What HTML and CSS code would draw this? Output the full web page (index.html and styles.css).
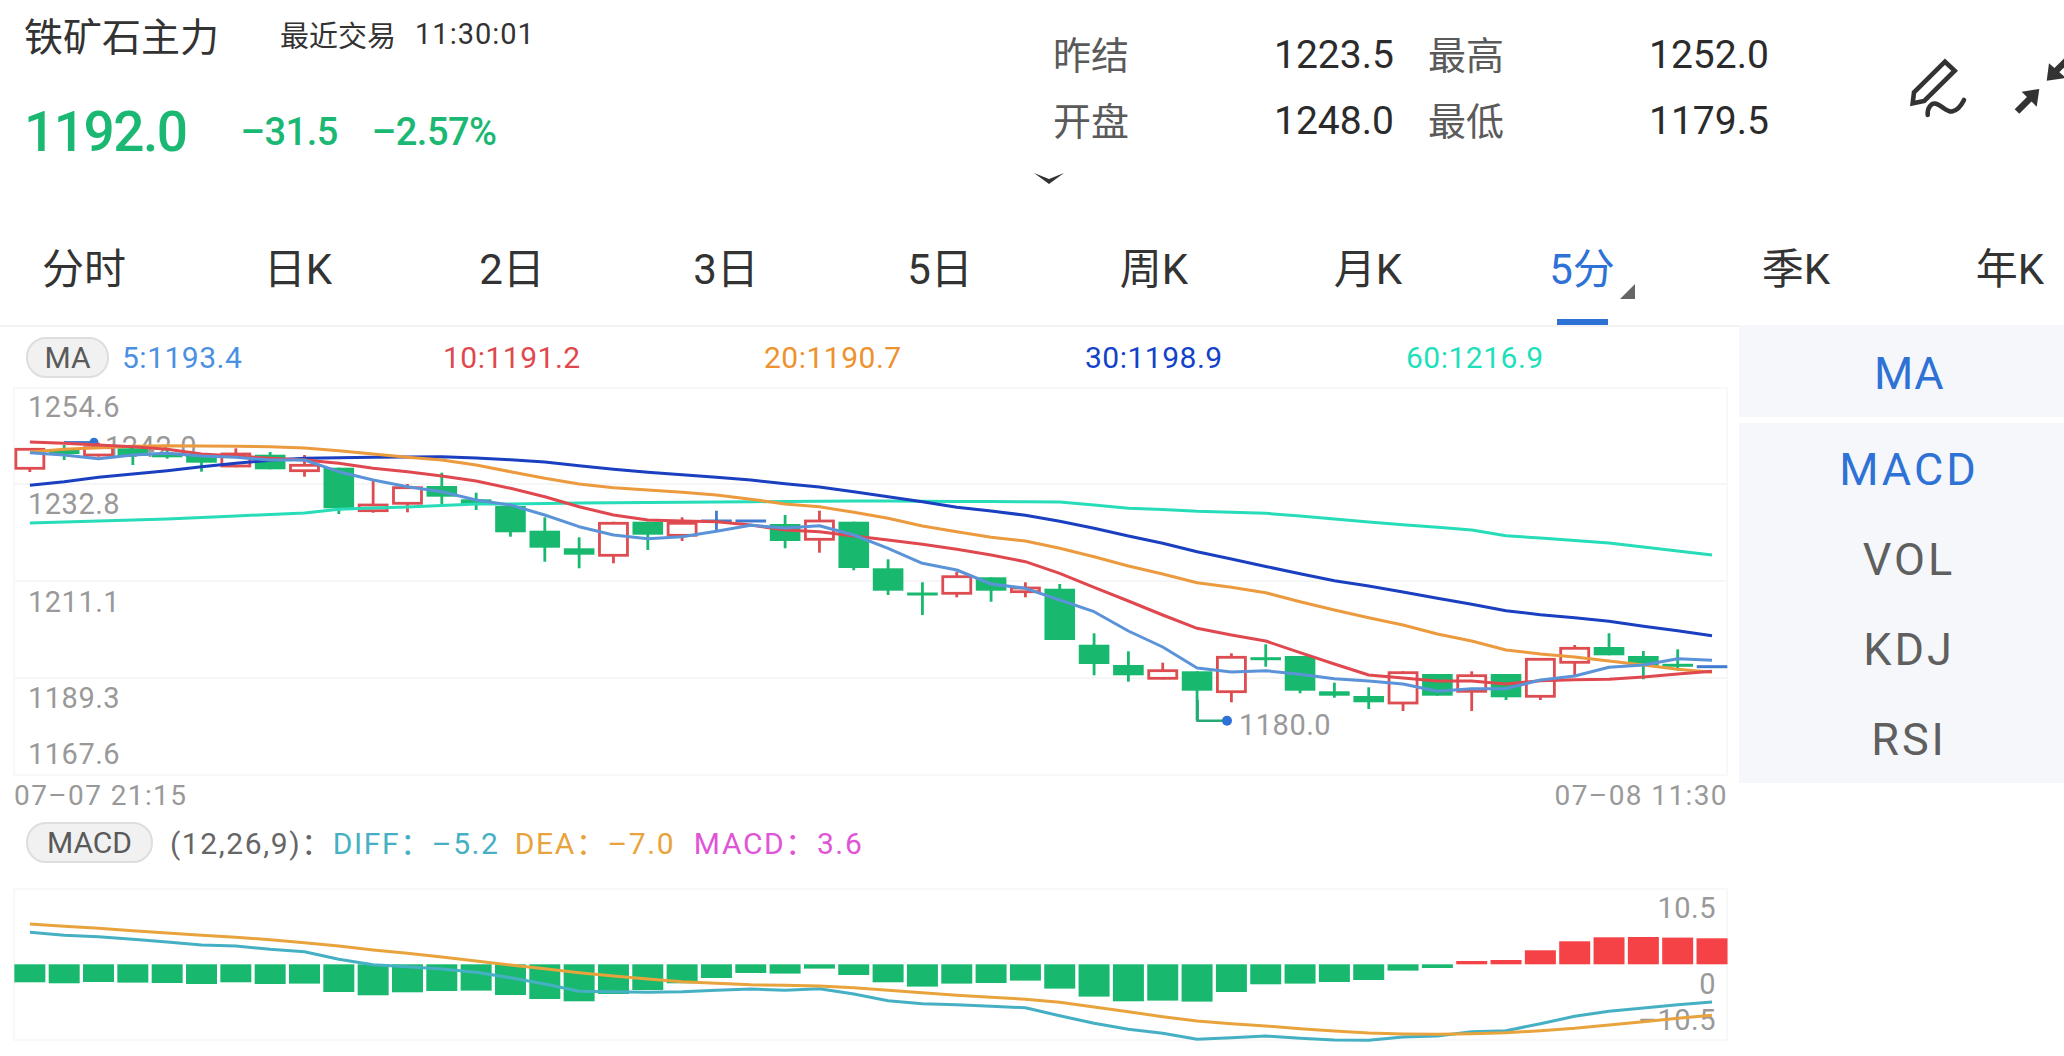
FILE: index.html
```html
<!DOCTYPE html>
<html lang="zh-CN">
<head>
    <meta charset="UTF-8">
    <meta name="viewport" content="width=device-width, initial-scale=1.0">
    <title>铁矿石主力</title>
    <link rel="stylesheet" href="styles.css">
</head>
<body>
    <div class="header">
        <div class="quote">
            <div class="quote-title">
                <h1>铁矿石主力</h1>
                <span class="trade-label">最近交易</span>
                <span class="trade-time">11:30:01</span>
            </div>
            <div class="quote-price">
                <span class="price">1192.0</span>
                <span class="change">–31.5</span>
                <span class="change change-pct">–2.57%</span>
            </div>
        </div>
        <div class="stats-col">
            <div class="stats">
                <span class="stat-label">昨结</span><span class="stat-value">1223.5</span>
                <span class="stat-label">最高</span><span class="stat-value">1252.0</span>
                <span class="stat-label">开盘</span><span class="stat-value">1248.0</span>
                <span class="stat-label">最低</span><span class="stat-value">1179.5</span>
            </div>
            <svg class="chevron" viewBox="0 0 30 11" width="30" height="11">
                <path d="M0 0 L15 6 L30 0 L15 11 Z" fill="#333"/>
            </svg>
        </div>
        <div class="tools">
            <svg class="icon-pencil" viewBox="1910 56 58 62" width="58" height="62" fill="none" stroke="#333" stroke-width="4.6">
                <path d="M1912.7 103.3 L1914 92.3 L1945 61.7 L1954.7 70.7 L1924.3 101 Z" stroke-linejoin="miter"/>
                <path d="M1927.7 115 C1927 107 1932 103 1935 103.5 C1942 105 1946 112 1952 111.5 C1958 110.5 1962 104 1964 100" stroke-linecap="round"/>
            </svg>
            <svg class="icon-expand" viewBox="2014 56 50 60" width="50" height="60">
                <path d="M2021.7 91.7 L2039.3 89 L2036.7 106.7 Z" fill="#333"/>
                <path d="M2017 111.5 L2031 97.5" stroke="#333" stroke-width="6.5"/>
                <path d="M2046.7 80.7 L2049 63.3 L2066 78 Z" fill="#333"/>
                <path d="M2054 73 L2072 55" stroke="#333" stroke-width="6.5"/>
            </svg>
        </div>
    </div>

    <div class="tabs">
        <div class="tab">分时</div>
        <div class="tab">日K</div>
        <div class="tab">2日</div>
        <div class="tab">3日</div>
        <div class="tab">5日</div>
        <div class="tab">周K</div>
        <div class="tab">月K</div>
        <div class="tab active">5分<i class="tab-corner"></i></div>
        <div class="tab">季K</div>
        <div class="tab">年K</div>
    </div>

    <div class="main">
        <div class="charts">
            <div class="legend ma-legend">
                <span class="pill">MA</span>
                <span class="ma-item ma5">5:1193.4</span>
                <span class="ma-item ma10">10:1191.2</span>
                <span class="ma-item ma20">20:1190.7</span>
                <span class="ma-item ma30">30:1198.9</span>
                <span class="ma-item ma60">60:1216.9</span>
            </div>
            <svg id="kline" class="chart" viewBox="0 387 1739 390" width="1739" height="390"></svg>
            <div class="dates">
                <span>07–07 21:15</span>
                <span>07–08 11:30</span>
            </div>
            <div class="legend macd-legend">
                <span class="pill pill-macd">MACD</span>
                <span class="macd-params">(12,26,9)：</span>
                <span class="macd-item diff">DIFF：–5.2</span>
                <span class="macd-item dea">DEA：–7.0</span>
                <span class="macd-item macd">MACD：3.6</span>
            </div>
            <svg id="macd" class="chart" viewBox="0 888 1739 154" width="1739" height="154"></svg>
        </div>
        <div class="side">
            <div class="side-box side-ma">
                <div class="side-item on">MA</div>
            </div>
            <div class="side-box">
                <div class="side-item on">MACD</div>
                <div class="side-item">VOL</div>
                <div class="side-item">KDJ</div>
                <div class="side-item">RSI</div>
            </div>
        </div>
    </div>

    <script src="chart.js"></script>
</body>
</html>
```

FILE: styles.css
```css
html, body {
    margin: 0;
    width: 2064px;
    height: 1056px;
    overflow: hidden;
    background-color: #ffffff;
    font-family: Roboto, "Noto Sans CJK SC", sans-serif;
    color: #333;
}
.header {
    display: flex;
    height: 220px;
}
.quote {
    width: 1034px;
    padding-left: 24px;
    box-sizing: border-box;
}
.quote-title {
    display: flex;
    align-items: center;
    height: 68px;
}
.quote-title h1 {
    margin: 0;
    font-size: 39px;
    font-weight: 400;
    color: #333;
}
.trade-label {
    margin-left: 61px;
    font-size: 29px;
}
.trade-time {
    margin-left: 19px;
    font-size: 29px;
    letter-spacing: 1px;
}
.quote-price {
    display: flex;
    align-items: center;
    height: 58px;
    margin-top: 35px;
    color: #1ab873;
}
.price {
    font-size: 55px;
    font-weight: 500;
    letter-spacing: -1.5px;
    margin-right: 54px;
}
.change {
    font-size: 38px;
    font-weight: 500;
    letter-spacing: -0.5px;
}
.change-pct {
    margin-left: 34px;
}
.stats-col {
    width: 876px;
}
.stats {
    display: grid;
    grid-template-columns: 221px 154px 221px auto;
    grid-auto-rows: 66px;
    align-items: center;
    padding: 22px 0 0 19px;
}
.stat-label {
    font-size: 38px;
    color: #5a5a5a;
    margin-bottom: 5px;
}
.stat-value {
    font-size: 39px;
    color: #2b2b2b;
}
.chevron {
    display: block;
    margin-top: 19px;
}
.tools {
    display: flex;
    align-items: flex-start;
    padding-top: 56px;
    gap: 46px;
}
.tools svg {
    display: block;
}
.tabs {
    display: flex;
    height: 105px;
    margin-left: -23px;
    width: 2140px;
}
.tab {
    position: relative;
    flex: 0 0 214px;
    height: 100%;
    box-sizing: border-box;
    padding-top: 21px;
    line-height: 58px;
    font-size: 42px;
    text-align: center;
    color: #333;
}
.tab.active {
    color: #2f72d6;
}
.tab.active::after {
    content: "";
    position: absolute;
    left: 82px;
    bottom: 0;
    width: 51px;
    height: 6px;
    background-color: #2f72d6;
}
.tab-corner {
    position: absolute;
    left: 145px;
    top: 64px;
    border-left: 15px solid transparent;
    border-bottom: 15px solid #666;
}
.main {
    display: flex;
}
.charts {
    width: 1739px;
    border-top: 2px solid #f3f3f3;
}
.chart {
    display: block;
}
.legend {
    display: flex;
    align-items: center;
}
.ma-legend {
    height: 60px;
    padding-left: 26px;
}
.pill {
    box-sizing: border-box;
    width: 83px;
    height: 41px;
    line-height: 37px;
    border: 2px solid #dedede;
    border-radius: 20px;
    background-color: #f1f1f1;
    text-align: center;
    font-size: 30px;
    letter-spacing: 0;
    color: #5a5a5a;
}
.pill-macd {
    width: 127px;
}
.ma-item {
    flex: 0 0 321px;
    font-size: 30px;
    letter-spacing: 0.5px;
}
.ma-legend .pill {
    margin-right: 13px;
}
.ma5 { color: #4a90e2; }
.ma10 { color: #e0484f; }
.ma20 { color: #ee922e; }
.ma30 { color: #1142c9; }
.ma60 { color: #1fe0bb; }
.dates {
    display: flex;
    justify-content: space-between;
    height: 37px;
    padding: 0 11px 0 14px;
    line-height: 38px;
    font-size: 28px;
    color: #999;
    letter-spacing: 1.4px;
}
.macd-legend {
    height: 74px;
    padding: 8px 0 25px 26px;
    box-sizing: border-box;
    font-size: 30px;
    letter-spacing: 1.6px;
}
.macd-params {
    margin: 0 0 3px 17px;
    color: #666;
}
.diff {
    flex: 0 0 182px;
    margin-bottom: 3px;
    color: #45b0c4;
}
.dea {
    flex: 0 0 179px;
    margin-bottom: 3px;
    color: #e9a33c;
}
.macd {
    margin-bottom: 3px;
    color: #e055d8;
}
.side {
    width: 325px;
}
.side-box {
    background-color: #f5f7fa;
    margin-bottom: 6px;
}
.side-ma {
    padding-top: 2px;
}
.side-item {
    height: 90px;
    line-height: 93px;
    text-align: center;
    font-size: 45px;
    letter-spacing: 3px;
    color: #5f5f5f;
    padding-left: 15px;
}
.side-ma .side-item {
    letter-spacing: 0.5px;
}
.side-item.on {
    color: #2f72d6;
}
.axis-label {
    font-size: 29px;
    fill: #999;
    letter-spacing: 0.5px;
}
```

FILE: chart.js
```js
const SVG_NS = 'http://www.w3.org/2000/svg';
const GREEN = '#18b96e';
const RED = '#dd4c50';
const BLUE = '#3f7bd0';

// x of the nth candle, same slots in both panels
const slotX = i => 29.85 + 34.33 * i;

// [type, bodyTop, bodyBottom, wickTop, wickBottom], screen y
// u = up (hollow), d = down (filled), f = flat
const candles = [
    ['u', 449.3, 468.3, 448, 472], ['d', 450, 454, 445, 460], ['u', 447.7, 455, 442.7, 456.7],
    ['d', 448.3, 456, 446.7, 465], ['d', 452.7, 457.3, 448.3, 458.7], ['d', 456, 462.7, 455, 471.7],
    ['u', 454, 466, 448.3, 467.3], ['d', 454.7, 469.3, 452, 469.3], ['u', 465.3, 470.7, 455, 476.7],
    ['d', 467.7, 508.3, 467.7, 514], ['u', 505, 510.7, 480, 512.7], ['u', 487.7, 503.3, 484, 512.3],
    ['d', 486, 496.7, 472.7, 504], ['d', 499.3, 505, 492.7, 510], ['d', 506, 532.3, 506, 536.7],
    ['d', 530.7, 547.7, 517.3, 561.7], ['d', 548.3, 554.7, 537.3, 568.3], ['u', 523.3, 555.3, 521.7, 563.3],
    ['d', 521.7, 534.7, 521.7, 550], ['u', 523.3, 535.3, 517.3, 541], ['f', 521, 521, 510.7, 530.7],
    ['f', 521, 521, 521, 521], ['d', 524, 541, 515, 548.3], ['u', 521, 539.3, 510.7, 552.7],
    ['d', 521.7, 568, 521.7, 570.3], ['d', 568.3, 590.7, 559.3, 595], ['g', 594, 594, 582.3, 615],
    ['u', 576.7, 593.3, 571.7, 597.3], ['d', 577.3, 590.7, 577.3, 601.7], ['u', 588, 591.7, 582.3, 597.3],
    ['d', 588.7, 640, 584, 640], ['d', 644.7, 664, 633.3, 675.3], ['d', 665, 675.3, 651.3, 681.7],
    ['u', 670.7, 678.3, 662.7, 679.3], ['d', 671.3, 690.7, 671.3, 720.7], ['u', 657.3, 691.7, 653.3, 702.3],
    ['g', 658.7, 658.7, 644.3, 666.7], ['d', 656, 690.7, 656, 693.3], ['d', 691.3, 695.7, 682.7, 697.7],
    ['d', 696, 702.3, 687.3, 709], ['u', 672.7, 703, 671.3, 711], ['d', 674, 695.7, 674, 695.7],
    ['u', 675.7, 691.3, 671.3, 711], ['d', 674, 697.3, 674, 700], ['u', 659.3, 696.3, 659.3, 700],
    ['u', 648.3, 662.3, 645, 675], ['d', 647, 655.3, 633.3, 655.3], ['d', 656, 666, 651, 679.3],
    ['g', 665.3, 665.3, 649.3, 670.7], ['f', 666.7, 666.7, 666.7, 666.7]
];

const maLines = [
    { color: '#27dcb8', ys: [523, 522, 521, 520, 519, 517.5, 516, 514.5, 513, 509.3, 508, 507, 505.5, 504, 504, 503.5, 503, 502.7, 502.5, 502.2, 502, 501.7, 501.5, 501.3, 501, 501, 501.2, 501.4, 501.6, 501.7, 502, 505, 508.3, 509.5, 511.3, 512.3, 513.3, 516, 519, 522, 524.7, 527.3, 530, 535.7, 538, 540.5, 543, 547, 551, 555] },
    { color: '#1a3fc0', ys: [485.3, 481.7, 477.3, 474, 470.7, 466.7, 463.3, 460.3, 458.3, 457.7, 457.3, 457, 456.7, 458, 459.7, 462, 465.7, 469.3, 472.3, 474.7, 477.3, 480, 483.7, 487, 491.7, 496.7, 501.7, 507.3, 511, 515.3, 521.3, 528.3, 536, 543.3, 551.7, 559, 566.5, 573.7, 580.7, 586, 592, 598.3, 604.3, 610.7, 614.7, 617.7, 621.3, 626.3, 630.7, 635.7] },
    { color: '#ec9a3e', ys: [452, 449.3, 447.7, 446.3, 445.7, 446, 446.3, 446.7, 448, 450.7, 454, 457.3, 460, 465, 471.7, 478.3, 484, 487.7, 490, 492.3, 495, 499.3, 504, 506.7, 512.3, 518.3, 526, 531.7, 537.3, 541, 548.3, 556.7, 566, 574, 582.7, 587.3, 592.7, 601.7, 610, 617.7, 625, 634, 641, 650, 654, 657, 661, 665, 669.3, 672.3] },
    { color: '#e0484f', ys: [442, 443.3, 445, 446.7, 449.3, 454, 456, 458.3, 460, 463.3, 468.3, 471.7, 476, 481, 488.3, 496.7, 506.7, 515, 520, 521, 521.7, 525, 530, 531.7, 536, 540, 544.3, 549.3, 555, 561.7, 573.3, 587.3, 601, 615, 628.3, 635, 641, 652.7, 664, 675, 678, 681, 681, 684, 680.7, 679.7, 679.3, 677, 674, 671.3] },
    { color: '#5b93d8', ys: [452.7, 455, 458.7, 455, 453.3, 456, 457.3, 460, 460, 471.7, 480, 486.7, 491.7, 500, 505, 515, 526.7, 535, 538.7, 536.7, 531.3, 525.3, 528, 525.7, 535, 548.3, 563.3, 570, 584, 588.3, 600, 611.7, 631, 647, 668, 672, 670.7, 674.3, 678.7, 681, 684, 691.3, 688.7, 688.7, 680, 676, 667.3, 665, 658.7, 660.3] }
];

const macdZero = 964.3;
// bar height from the zero line, positive is up
const macdBars = [-18, -19, -17.7, -18.3, -18.7, -19.7, -18, -19.7, -19.3, -27.7, -31, -28, -26.7, -26.3, -30.7, -34.7, -37, -29.7, -25.7, -19, -13.7, -8.7, -9.3, -4.3, -10.7, -18, -22.3, -19.3, -18.7, -16.3, -24.3, -32.3, -37, -36.3, -37.3, -27.7, -20, -19.3, -17.7, -15.7, -6.3, -3.7, 3.3, 4.3, 14, 23, 27, 27.3, 26.7, 26];
const deaLine = [924, 926.3, 928.3, 930.7, 933, 935.3, 937.3, 939.7, 942.7, 946, 950, 953.3, 957, 961, 965, 968.7, 972.7, 976, 979, 981.7, 983.3, 984.7, 985.3, 986, 987.7, 990.3, 992.7, 995.3, 997.3, 999.3, 1002.3, 1007, 1011.7, 1016.7, 1021, 1023.7, 1026, 1028.7, 1031, 1033, 1034, 1034.3, 1033.7, 1032.7, 1030.7, 1028.3, 1025, 1021.7, 1018.3, 1015.3];
const diffLine = [932.3, 935.3, 936.7, 939.3, 942, 945, 946, 949.3, 951.7, 959.3, 964.7, 966.7, 969, 972.3, 977.7, 984, 991.3, 991.7, 992.3, 991.7, 990.3, 989, 990.3, 988.7, 994, 1000.7, 1003.7, 1004.7, 1006.3, 1007.7, 1015.7, 1023.3, 1029.3, 1033.3, 1039.3, 1037.7, 1036, 1038.3, 1040, 1040.3, 1037, 1036, 1031.7, 1030.7, 1023.7, 1016.3, 1011.3, 1008, 1004.7, 1002];

function add(svg, tag, attrs, text) {
    const el = document.createElementNS(SVG_NS, tag);
    Object.keys(attrs).forEach(k => el.setAttribute(k, attrs[k]));
    if (text) el.textContent = text;
    svg.appendChild(el);
    return el;
}

function seg(svg, x1, y1, x2, y2, color, width) {
    add(svg, 'line', { x1, y1, x2, y2, stroke: color, 'stroke-width': width });
}

function polyline(svg, ys, color) {
    const points = ys.map((y, i) => slotX(i).toFixed(1) + ',' + y).join(' ');
    add(svg, 'polyline', { points, fill: 'none', stroke: color, 'stroke-width': 3, 'stroke-linejoin': 'round' });
}

function label(svg, x, y, text, anchor) {
    add(svg, 'text', { x, y, class: 'axis-label', 'text-anchor': anchor || 'start' }, text);
}

function drawCandle(svg, c, i) {
    const [type, top, bottom, wickTop, wickBottom] = c;
    const x = slotX(i);
    if (type === 'u') {
        seg(svg, x, wickTop, x, top, RED, 2.8);
        seg(svg, x, bottom, x, wickBottom, RED, 2.8);
        add(svg, 'rect', { x: x - 14, y: top, width: 28, height: bottom - top, fill: '#fff', stroke: RED, 'stroke-width': 2.8 });
    } else if (type === 'd') {
        seg(svg, x, wickTop, x, wickBottom, GREEN, 2.8);
        add(svg, 'rect', { x: x - 15.3, y: top, width: 30.6, height: bottom - top, fill: GREEN });
    } else {
        const color = type === 'f' ? BLUE : GREEN;
        seg(svg, x, wickTop, x, wickBottom, color, 2.8);
        seg(svg, x - 15.3, top, x + 15.3, top, color, 3);
    }
}

function drawKline(svg) {
    add(svg, 'rect', { x: 14, y: 388, width: 1713, height: 387, fill: 'none', stroke: '#f6f6f6', 'stroke-width': 1.5 });
    [484, 581, 678].forEach(y => seg(svg, 14, y, 1727, y, '#f6f6f6', 2));

    label(svg, 28, 417, '1254.6');
    label(svg, 28, 514, '1232.8');
    label(svg, 28, 612, '1211.1');
    label(svg, 28, 708, '1189.3');
    label(svg, 28, 764, '1167.6');

    // high marker sits under the candles
    label(svg, 105, 457, '1242.0');
    seg(svg, 64, 442.3, 94, 442.3, BLUE, 2.5);
    add(svg, 'circle', { cx: 94, cy: 442.3, r: 4.5, fill: '#2f72d6' });

    candles.forEach((c, i) => drawCandle(svg, c, i));
    maLines.forEach(m => polyline(svg, m.ys, m.color));

    // low marker
    add(svg, 'polyline', { points: '1197.6,700 1197.6,720.7 1227,720.7', fill: 'none', stroke: '#27a974', 'stroke-width': 2.6 });
    add(svg, 'circle', { cx: 1227, cy: 720.7, r: 5, fill: '#2f72d6' });
    label(svg, 1239, 735, '1180.0');
}

function drawMacd(svg) {
    add(svg, 'rect', { x: 14, y: 889, width: 1713, height: 151, fill: 'none', stroke: '#f6f6f6', 'stroke-width': 1.5 });
    macdBars.forEach((h, i) => {
        add(svg, 'rect', {
            x: slotX(i) - 15.5,
            y: h > 0 ? macdZero - h : macdZero,
            width: 31,
            height: Math.abs(h),
            fill: h > 0 ? '#f44247' : GREEN
        });
    });
    label(svg, 1716, 918, '10.5', 'end');
    label(svg, 1716, 994, '0', 'end');
    label(svg, 1716, 1030, '–10.5', 'end');
    polyline(svg, diffLine, '#45b0c4');
    polyline(svg, deaLine, '#e9a33c');
}

drawKline(document.getElementById('kline'));
drawMacd(document.getElementById('macd'));
```
